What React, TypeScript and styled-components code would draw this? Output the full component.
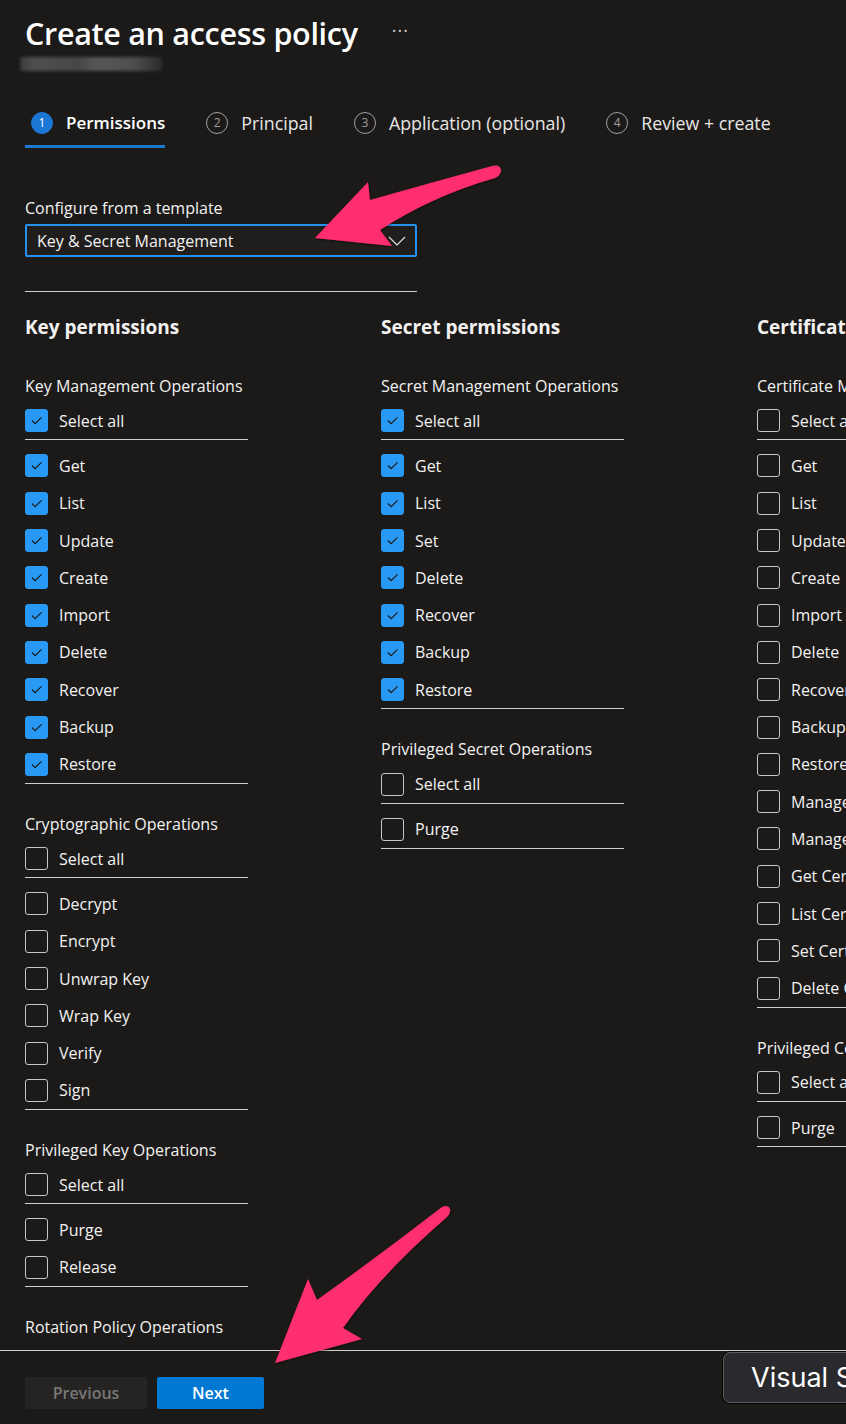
import * as React from 'react'
import styled, { createGlobalStyle } from 'styled-components'

const GlobalStyle = createGlobalStyle`
  html, body {
    margin: 0;
    padding: 0;
    background: #1b1a19;
    overflow: hidden;
  }
  body {
    font-family: "Open Sans", "Noto Sans", "Liberation Sans", sans-serif;
    color: #f3f2f1;
  }
`

const Page = styled.div`
  position: relative;
  width: 846px;
  height: 1424px;
  display: flex;
  flex-direction: column;
  overflow: hidden;
  background: #1b1a19;
`

const Main = styled.main`
  flex: 1;
  overflow: hidden;
  padding: 0 0 0 25px;
`

const TitleRow = styled.div`
  display: flex;
  align-items: center;
  gap: 34px;
  padding-top: 13px;
`

const H1 = styled.h1`
  margin: 0;
  font-size: 30.5px;
  line-height: 40px;
  font-weight: 600;
  color: #ffffff;
  letter-spacing: -0.3px;
`

const More = styled.span`
  font-size: 18px;
  color: #d2d0ce;
  letter-spacing: 1px;
  margin-top: -6px;
`

const Blurred = styled.div`
  width: 142px;
  height: 14px;
  margin: 4px 0 0 -5px;
  background: linear-gradient(90deg, #3a3938 0%, #505050 10%, #474645 40%, #565656 55%, #4e4e4e 80%, #2c2b2a 100%);
  filter: blur(1.5px);
`

const Tabs = styled.nav`
  display: flex;
  gap: 35px;
  margin-top: 29px;
`

const Tab = styled.div<{ $active?: boolean }>`
  display: flex;
  align-items: center;
  gap: 13px;
  height: 45px;
  padding-left: 6px;
  border-bottom: 3px solid ${p => (p.$active ? '#1b79d0' : 'transparent')};
  font-size: ${p => (p.$active ? '17px' : '17.8px')};
  color: ${p => (p.$active ? '#ffffff' : '#e8e6e4')};
  font-weight: ${p => (p.$active ? 600 : 400)};
`

const StepCircle = styled.span<{ $active?: boolean }>`
  width: 22px;
  height: 22px;
  border-radius: 50%;
  box-sizing: border-box;
  display: inline-flex;
  align-items: center;
  justify-content: center;
  font-size: 12px;
  font-weight: 400;
  background: ${p => (p.$active ? '#1a78d4' : 'transparent')};
  border: 1px solid ${p => (p.$active ? '#1a78d4' : '#a19f9d')};
  color: ${p => (p.$active ? '#ffffff' : '#a19f9d')};
`

const FieldLabel = styled.div`
  margin-top: 50px;
  font-size: 16px;
  line-height: 20px;
`

const Select = styled.div`
  margin-top: 6px;
  width: 392px;
  height: 33px;
  box-sizing: border-box;
  border: 2px solid #2492ef;
  border-radius: 2px;
  background: #1f1e1d;
  display: flex;
  align-items: center;
  justify-content: space-between;
  padding: 0 9px 0 10px;
  font-size: 16px;
`

const Rule = styled.hr`
  margin: 34px 0 0;
  width: 392px;
  border: none;
  border-top: 1px solid #d2d0ce;
`

const Columns = styled.div`
  display: flex;
  gap: 133px;
  width: 1200px;
`

const Column = styled.section<{ $w: number }>`
  width: ${p => p.$w}px;
  flex: none;
`

const ColHeading = styled.h2`
  margin: 22px 0 35px;
  font-size: 19px;
  line-height: 26px;
  font-weight: 700;
  white-space: nowrap;
`

const Group = styled.div`
  & + & {
    margin-top: 29px;
  }
`

const GroupTitle = styled.div`
  font-size: 16px;
  line-height: 22px;
  margin-bottom: 5px;
  white-space: nowrap;
`

const SelectAllRow = styled.div`
  border-bottom: 1px solid #d2d0ce;
`

const Items = styled.div`
  padding-top: 7px;
  border-bottom: 1px solid #d2d0ce;
`

const Row = styled.label`
  display: flex;
  align-items: center;
  gap: 11px;
  height: 37.3px;
  font-size: 16px;
  white-space: nowrap;
`

const Box = styled.span<{ $checked?: boolean }>`
  width: 23px;
  height: 23px;
  box-sizing: border-box;
  flex: none;
  border-radius: 3px;
  display: inline-flex;
  align-items: center;
  justify-content: center;
  background: ${p => (p.$checked ? '#2899f5' : 'transparent')};
  border: 1px solid ${p => (p.$checked ? '#2899f5' : '#c8c6c4')};
`

const Footer = styled.footer`
  flex: none;
  border-top: 1px solid #d2d0ce;
  padding: 26px 25px 15px;
  display: flex;
  gap: 10px;
`

const Button = styled.button<{ $primary?: boolean }>`
  height: 32px;
  border: none;
  border-radius: 2px;
  padding: 0;
  width: ${p => (p.$primary ? '107px' : '122px')};
  font-family: inherit;
  font-size: 16px;
  font-weight: 600;
  background: ${p => (p.$primary ? '#0078d4' : '#252423')};
  color: ${p => (p.$primary ? '#ffffff' : '#797775')};
`

const Tooltip = styled.div`
  position: absolute;
  left: 723px;
  top: 1352px;
  height: 51px;
  padding: 0 20px 0 27px;
  display: flex;
  align-items: center;
  white-space: nowrap;
  box-sizing: border-box;
  border-radius: 7px;
  background: #2a292d;
  border: 1px solid #5c5b60;
  box-shadow: 0 0 0 1px #050505;
  font-family: Inter, "Liberation Sans", sans-serif;
  font-size: 27px;
  color: #ffffff;
`

const Overlay = styled.svg`
  position: absolute;
  left: 0;
  top: 0;
  pointer-events: none;
`

type Item = { label: string; checked?: boolean }
type GroupData = { title: string; all?: boolean; items: Item[] }
type ColumnData = { heading: string; width: number; groups: GroupData[] }

const on = (labels: string[], checked: boolean): Item[] => labels.map(label => ({ label, checked }))

const columns: ColumnData[] = [
  {
    heading: 'Key permissions',
    width: 223,
    groups: [
      {
        title: 'Key Management Operations',
        all: true,
        items: on(['Get', 'List', 'Update', 'Create', 'Import', 'Delete', 'Recover', 'Backup', 'Restore'], true),
      },
      {
        title: 'Cryptographic Operations',
        all: false,
        items: on(['Decrypt', 'Encrypt', 'Unwrap Key', 'Wrap Key', 'Verify', 'Sign'], false),
      },
      { title: 'Privileged Key Operations', all: false, items: on(['Purge', 'Release'], false) },
      // the rest of this group is below the fold
      { title: 'Rotation Policy Operations', items: [] },
    ],
  },
  {
    heading: 'Secret permissions',
    width: 243,
    groups: [
      {
        title: 'Secret Management Operations',
        all: true,
        items: on(['Get', 'List', 'Set', 'Delete', 'Recover', 'Backup', 'Restore'], true),
      },
      { title: 'Privileged Secret Operations', all: false, items: on(['Purge'], false) },
    ],
  },
  {
    heading: 'Certificate permissions',
    width: 280,
    groups: [
      {
        title: 'Certificate Management Operations',
        all: false,
        items: on(
          [
            'Get',
            'List',
            'Update',
            'Create',
            'Import',
            'Delete',
            'Recover',
            'Backup',
            'Restore',
            'Manage Contacts',
            'Manage Certificate Authorities',
            'Get Certificate Authorities',
            'List Certificate Authorities',
            'Set Certificate Authorities',
            'Delete Certificate Authorities',
          ],
          false,
        ),
      },
      { title: 'Privileged Certificate Operations', all: false, items: on(['Purge'], false) },
    ],
  },
]

function Check({ checked, label }: { checked?: boolean; label: string }) {
  return (
    <Row>
      <Box $checked={checked}>
        {checked && (
          <svg width="23" height="23" viewBox="0 0 23 23">
            <path d="M6.5 11.5 L10 15 L17 8" fill="none" stroke="#1b1a19" strokeWidth="1.3" />
          </svg>
        )}
      </Box>
      {label}
    </Row>
  )
}

const steps = ['Permissions', 'Principal', 'Application (optional)', 'Review + create']

export default function App() {
  return (
    <Page>
      <GlobalStyle />
      <Main>
        <TitleRow>
          <H1>Create an access policy</H1>
          <More>···</More>
        </TitleRow>
        <Blurred />
        <Tabs>
          {steps.map((s, i) => (
            <Tab key={s} $active={i === 0}>
              <StepCircle $active={i === 0}>{i + 1}</StepCircle>
              {s}
            </Tab>
          ))}
        </Tabs>

        <FieldLabel>Configure from a template</FieldLabel>
        <Select>
          Key &amp; Secret Management
          <svg width="18" height="10" viewBox="0 0 18 10">
            <path d="M1 1 L9 9 L17 1" fill="none" stroke="#e1dfdd" strokeWidth="1.2" />
          </svg>
        </Select>
        <Rule />

        <Columns>
          {columns.map(col => (
            <Column key={col.heading} $w={col.width}>
              <ColHeading>{col.heading}</ColHeading>
              {col.groups.map(g => (
                <Group key={g.title}>
                  <GroupTitle>{g.title}</GroupTitle>
                  {g.items.length > 0 && (
                    <>
                      <SelectAllRow>
                        <Check checked={g.all} label="Select all" />
                      </SelectAllRow>
                      <Items>
                        {g.items.map(it => (
                          <Check key={it.label} checked={it.checked} label={it.label} />
                        ))}
                      </Items>
                    </>
                  )}
                </Group>
              ))}
            </Column>
          ))}
        </Columns>
      </Main>

      <Footer>
        <Button>Previous</Button>
        <Button $primary>Next</Button>
      </Footer>

      <Tooltip>Visual Studio Code</Tooltip>

      <Overlay width="846" height="1424" viewBox="0 0 846 1424">
        <defs>
          <filter id="shadow" x="-20%" y="-20%" width="140%" height="140%">
            <feDropShadow dx="0" dy="1" stdDeviation="1.2" floodColor="#000" floodOpacity="0.6" />
          </filter>
        </defs>
        <path
          filter="url(#shadow)"
          fill="#ff2d6f"
          d="M315 238 L368 182 L370 200 Q430 183 492 166 Q500 164 501 170 Q501 175 495 178 Q432 196 380 230 L392 246 Z"
        />
        <path
          filter="url(#shadow)"
          fill="#ff2d6f"
          d="M275 1363 L308 1279 L317 1300 Q380 1255 442 1207 Q448 1204 450 1209 Q451 1213 447 1217 Q380 1275 343 1328 L362 1339 Z"
        />
      </Overlay>
    </Page>
  )
}
